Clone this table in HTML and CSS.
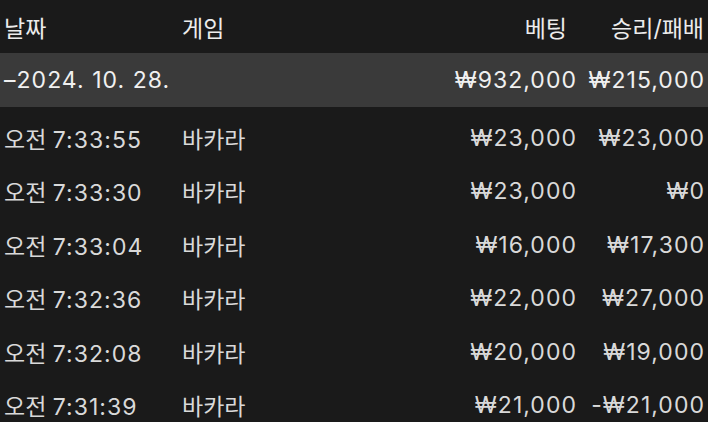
FILE: index.html
```html
<!DOCTYPE html>
<html lang="ko">
<head>
    <meta charset="UTF-8">
    <meta name="viewport" content="width=device-width, initial-scale=1.0">
    <title>베팅 내역</title>
    <link rel="stylesheet" href="styles.css">
</head>
<body>

<div class="history">
    <!-- Column headers -->
    <div class="row head">
        <span class="date">날짜</span>
        <span class="game">게임</span>
        <span class="bet">베팅</span>
        <span class="result">승리/패배</span>
    </div>

    <!-- Day group -->
    <div class="row group">
        <span class="date num">–2024. 10. 28.</span>
        <span class="game"></span>
        <span class="bet num">₩932,000</span>
        <span class="result num">₩215,000</span>
    </div>

    <div class="rows">
        <div class="row">
            <span class="date"><span>오전</span> <span class="num">7:33:55</span></span>
            <span class="game">바카라</span>
            <span class="bet num">₩23,000</span>
            <span class="result num">₩23,000</span>
        </div>
        <div class="row">
            <span class="date"><span>오전</span> <span class="num">7:33:30</span></span>
            <span class="game">바카라</span>
            <span class="bet num">₩23,000</span>
            <span class="result num">₩0</span>
        </div>
        <div class="row">
            <span class="date"><span>오전</span> <span class="num">7:33:04</span></span>
            <span class="game">바카라</span>
            <span class="bet num">₩16,000</span>
            <span class="result num">₩17,300</span>
        </div>
        <div class="row">
            <span class="date"><span>오전</span> <span class="num">7:32:36</span></span>
            <span class="game">바카라</span>
            <span class="bet num">₩22,000</span>
            <span class="result num">₩27,000</span>
        </div>
        <div class="row">
            <span class="date"><span>오전</span> <span class="num">7:32:08</span></span>
            <span class="game">바카라</span>
            <span class="bet num">₩20,000</span>
            <span class="result num">₩19,000</span>
        </div>
        <div class="row">
            <span class="date"><span>오전</span> <span class="num">7:31:39</span></span>
            <span class="game">바카라</span>
            <span class="bet num">₩21,000</span>
            <span class="result num">-₩21,000</span>
        </div>
    </div>
</div>

</body>
</html>
```

FILE: styles.css
```css
body {
    font-family: Inter, 'Noto Sans CJK KR', sans-serif;
    background-color: #1a1a1a;
    color: #d9d9d9;
    margin: 0;
    padding: 0;
    height: 100vh;
    overflow: hidden;
}

.history {
    display: flex;
    flex-direction: column;
    width: 100%;
}

.row {
    display: grid;
    grid-template-columns: 178px 1fr 180px 128px;
    align-items: center;
    height: 53.5px;
    padding: 0 4px;
    font-size: 23px;
    white-space: nowrap;
}

.row.head {
    height: 53px;
    color: #ececec;
}

.row.group {
    height: 54px;
    background-color: #3a3a3a;
    color: #f0f0f0;
}

.rows {
    padding-top: 4px;
}

.num {
    letter-spacing: 0.045em;
}

.bet,
.result {
    text-align: right;
}

/* trailing letter-spacing pushes numbers left; pull them back */
.bet.num,
.result.num {
    margin-right: -1px;
}

.head .bet {
    padding-right: 9px;
}
```
